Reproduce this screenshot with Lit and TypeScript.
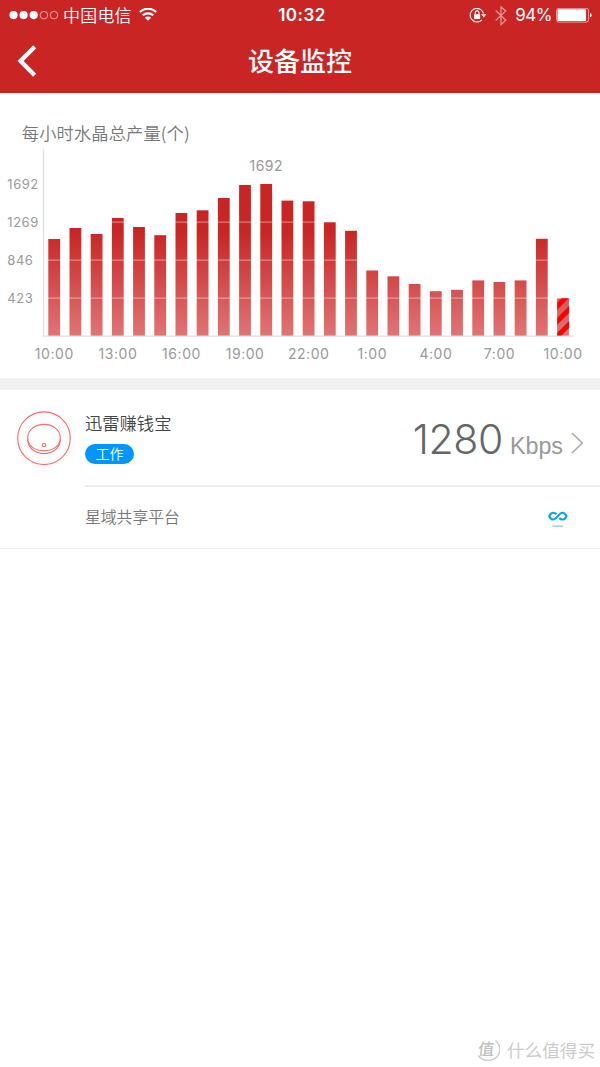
import { LitElement, html, svg, css } from 'lit';
import { customElement } from 'lit/decorators.js';

const BASE = 335.6;
const TOPS = [239, 228, 234, 218, 227, 235.2, 213, 210.3, 198, 185, 184, 200.6, 201.3, 222,
  230.8, 270.5, 276.3, 284, 291.2, 289.8, 280.4, 282, 280.4, 238.8, 298.2];
const GRID: [number, string][] = [[184, '1692'], [222.2, '1269'], [260.2, '846'], [298.2, '423']];
const HOURS = ['10:00', '13:00', '16:00', '19:00', '22:00', '1:00', '4:00', '7:00', '10:00'];
const STEP = 21.2;

@customElement('status-bar')
class StatusBar extends LitElement {
  static styles = css`
    :host { display: grid; grid-template-columns: 1fr auto 1fr; height: 31px; align-items: center; color: #fff;
      font: 17px/31px Inter, "Noto Sans CJK SC", sans-serif; }
    .left, .right { display: flex; align-items: center; height: 31px; }
    .left { padding-left: 9px; }
    .right { justify-content: flex-end; padding-right: 8px; }
    .carrier { font: 350 17px/29px "Noto Sans CJK SC", sans-serif; height: 31px; margin: 0 7px 0 4px; width: 69px; white-space: nowrap; letter-spacing: .2px; }
    .time { font-weight: 600; font-size: 17px; letter-spacing: .5px; padding-left: 4px; }
    .pct { margin: 0 4px 0 8px; font-size: 17px; letter-spacing: -.5px; }
    svg { display: block; flex: none; }
    .bt { margin-left: 8px; }
  `;
  render() {
    return html`
      <div class="left">
        <svg width="50" height="12" viewBox="0 0 50 12">
          ${[4.5, 14.6, 24.7].map(x => svg`<circle cx=${x} cy="5.1" r="4.1" fill="#fff"/>`)}
          ${[34.9, 45].map(x => svg`<circle cx=${x} cy="5.1" r="3.8" fill="none" stroke="#fff" stroke-width=".7" opacity=".8"/>`)}
        </svg>
        <span class="carrier">中国电信</span>
        <svg width="18" height="16" viewBox="0 .8 18 16" fill="none" stroke="#fff" stroke-width="2.2">
          <path d="M.8 4.8A12 12 0 0 1 17.2 4.8M3.7 8.1A8 8 0 0 1 14.3 8.1"/>
          <path d="M9 13.6 5.8 10.6Q9 7.9 12.2 10.6Z" fill="#fff" stroke="none"/>
        </svg>
      </div>
      <span class="time">10:32</span>
      <div class="right">
        <svg width="18" height="16" viewBox="0 0 18 16" fill="none" stroke="#fff" stroke-width="1.1">
          <path d="M14.5 5.4A6.8 6.8 0 1 0 12.9 11.8"/>
          <path d="M12.2 6.2H17.4L14.8 9.4Z" fill="#fff" stroke="none"/>
          <rect x="5.1" y="6.2" width="6" height="4.8" fill="#fff" stroke="none"/>
          <path d="M6.2 6.4V4.8a1.9 1.9 0 0 1 3.8 0v1.6"/>
        </svg>
        <svg class="bt" width="12" height="20" viewBox="0 0 12 20" fill="none" stroke="#fff" stroke-width="1.3" opacity=".5">
          <path d="M.7 4.5 10.8 14.3 6 18.5V.9L10.8 4.9.7 14.5"/>
        </svg>
        <span class="pct">94%</span>
        <svg width="36" height="16" viewBox="0 0 36 16">
          <rect x=".6" y=".3" width="32" height="13.8" rx="2.4" fill="none" stroke="#fff" stroke-width=".9" opacity=".65"/>
          <rect x="1.5" y="1.3" width="28.6" height="11.8" rx="1.2" fill="#fff"/>
          <path d="M34 5.1Q35.6 5.5 35.6 7.3T34 9.5Z" fill="#fff"/>
        </svg>
      </div>`;
  }
}

@customElement('output-chart')
class OutputChart extends LitElement {
  static styles = css`
    :host, svg { display: block; }
    text { font-family: Inter, "Noto Sans CJK SC", sans-serif; fill: #999; }
    .y { font-size: 13px; letter-spacing: .55px; }
    .x { font-size: 14px; letter-spacing: .55px; text-anchor: middle; }
    .title { font-family: "Noto Sans CJK SC", sans-serif; font-size: 17.2px; fill: #777; font-weight: 350; }
  `;
  render() {
    return html`
      <svg width="600" height="285" viewBox="0 93 600 285">
        <defs>
          <linearGradient id="g" gradientUnits="userSpaceOnUse" x1="0" x2="0" y1="232" y2="336">
            <stop stop-color="#c92524"/><stop offset="1" stop-color="#e17475"/>
          </linearGradient>
          <clipPath id="c"><rect x="557.3" y="298.2" width="11.8" height="37.4"/></clipPath>
        </defs>
        <text class="title" x="21.8" y="139.6" textLength="168">每小时水晶总产量(个)</text>
        <path d="M43.5 149.5V336.2H574" fill="none" stroke="#e0e0e0" stroke-width="1.3"/>
        ${TOPS.map((y, i) => svg`<rect x=${48.3 + i * STEP} y=${y} width="11.8" height=${BASE - y} fill="url(#g)"/>`)}
        ${GRID.slice(1).map(([y]) => svg`<path d=${`M48 ${y}H569`} stroke="#fff" stroke-width="1.2" opacity=".4"/>`)}
        <g clip-path="url(#c)" stroke="#f00" stroke-width="5">
          <path d="M552 311.5 575 288.5M552 326.5 575 303.5M552 341.5 575 318.5M552 356.5 575 333.5"/>
        </g>
        ${GRID.map(([y, t]) => svg`<text class="y" x="7.3" y=${y + 5.2}>${t}</text>`)}
        <text class="x" x="266.3" y="171.2">1692</text>
        ${HOURS.map((t, i) => svg`<text class="x" x=${54.3 + i * STEP * 3} y="359.3">${t}</text>`)}
      </svg>`;
  }
}

@customElement('app-root')
class AppRoot extends LitElement {
  static styles = css`
    :host { display: flex; flex-direction: column; width: 600px; height: 1067px; overflow: hidden; background: #fff;
      font-family: "Noto Sans CJK SC", sans-serif; }
    svg { display: block; flex: none; }
    header { background: #c92524; height: 92.6px; flex: none; }
    nav { display: grid; grid-template-columns: 60px 1fr 60px; align-items: center; height: 60px; }
    .back { margin-left: 17px; }
    h1 { margin: 0; font-size: 26px; line-height: 58px; height: 60px; font-weight: 500; color: #fff; text-align: center; }
    .gap { height: 12px; background: #f1f1f1; flex: none; }
    .device { display: flex; height: 95.4px; padding-left: 17px; flex: none; }
    .disc { margin-top: 21px; }
    .info { display: flex; flex-direction: column; align-items: flex-start; margin-left: 14px; padding-top: 20px; flex: 1; }
    .name { font-size: 17.3px; line-height: 25px; color: #444; font-weight: 350; }
    .tag { margin-top: 9px; width: 49px; height: 20px; border-radius: 10px; background: #0096ff; color: #fff; font-size: 14px;
      font-weight: 350; line-height: 19px; text-align: center; }
    .rate { display: flex; align-items: baseline; height: 95px; padding-right: 16px; }
    .num { font: 300 41px/98px Inter, sans-serif; color: #666; letter-spacing: -.4px; }
    .unit { font: 23.3px/98px "Liberation Sans", sans-serif; color: #999; margin: 0 8px 0 7px; }
    .go { align-self: flex-start; margin-top: 42px; }
    .platform { display: flex; justify-content: space-between; align-items: center; margin-left: 85px; border-top: 2px solid #ececec;
      height: 60.6px; padding-right: 32px; font-size: 15.8px; color: #777; font-weight: 350; flex: none; }
    .cloud { margin-top: 5px; }
    .platform span { padding-bottom: 2px; }
    .line { height: 1px; background: #f1f1f1; flex: none; }
    .mark { display: flex; justify-content: flex-end; align-items: center; margin-top: auto; height: 36px; padding-right: 5px;
      gap: 7px; color: #ccc; font-size: 17.6px; font-weight: 400; }
    .badge { font-size: 16px; font-weight: 500; fill: #c0c0c0; }
  `;
  render() {
    return html`
      <header>
        <status-bar></status-bar>
        <nav>
          <svg class="back" width="20" height="32" viewBox="0 0 20 32"><path d="M17.7 1.8 3.6 16 17.7 30.2" fill="none" stroke="#fff" stroke-width="4.4"/></svg>
          <h1>设备监控</h1>
        </nav>
      </header>
      <output-chart></output-chart>
      <div class="gap"></div>
      <section class="device">
        <svg class="disc" width="54" height="54" viewBox="0 0 54 54" fill="none" stroke="#ff6b6b" stroke-width="1.1">
          <circle cx="27" cy="27.2" r="26.3"/>
          <path d="M43.3 26.9C43.3 35 36 39.7 27 39.7S10.7 35 10.7 26.9C10.7 18.8 18 13.4 27 13.4S43.3 18.8 43.3 26.9Z"/>
          <path d="M10.8 27.9V30.4C12 37.9 19 42.6 27 42.6S42 37.9 43.2 30.4V27.9"/>
          <circle cx="27" cy="33.9" r="1.7"/>
        </svg>
        <div class="info"><div class="name">迅雷赚钱宝</div><div class="tag">工作</div></div>
        <div class="rate">
          <span class="num">1280</span><span class="unit">Kbps</span>
          <svg class="go" width="13" height="22" viewBox="0 0 13 22"><path d="M1 1 11.3 11 1 21" fill="none" stroke="#aaa" stroke-width="1.6"/></svg>
        </div>
      </section>
      <section class="platform">
        <span>星域共享平台</span>
        <svg class="cloud" width="20" height="18" viewBox="0 0 20 18" fill="none" stroke="#0aa5e8" stroke-width="2.1">
          <path d="M8.5 3.3C7.4 2.1 6.3 1.7 5.1 1.7 3.5 1.7 2.2 3.2 1.2 5.2 2.2 7.2 3.5 8.5 5.1 8.5 9 8.5 10.5 1.7 14.5 1.7 16.1 1.7 17.5 3.2 18.5 5.2 17.5 7.2 16.1 8.5 14.5 8.5 13.3 8.5 12.2 8.1 11.2 7"/>
          <ellipse cx="9.8" cy="15.2" rx="5.6" ry=".9" fill="#99d4f5" stroke="none"/>
        </svg>
      </section>
      <div class="line"></div>
      <footer class="mark">
        <svg width="24" height="26" viewBox="0 0 24 26">
          <path d="M19.5 4.5A11 11 0 0 1 12 24.3 11 11 0 0 1 2.2 19.5" fill="none" stroke="#ccc" stroke-width="1.4"/>
          <text class="badge" x="3.4" y="18.5" transform="skewX(-5)">值</text>
        </svg>
        <span>什么值得买</span>
      </footer>`;
  }
}
